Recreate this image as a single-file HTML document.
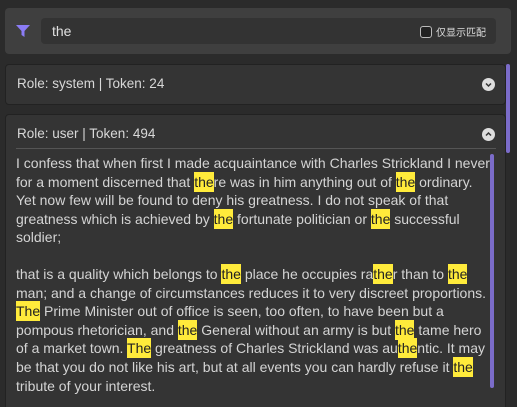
<!DOCTYPE html>
<html><head><meta charset="utf-8"><style>
html,body{margin:0;width:517px;height:407px;overflow:hidden}
body{background:#2b2b2b;font-family:"Liberation Sans","Noto Sans CJK SC",sans-serif;color:#d6d6d6;position:relative}
.top{position:absolute;left:5px;top:8px;width:506px;height:46px;background:#3f3f3f;border-radius:4px}
.inp{position:absolute;left:41px;top:18px;width:455px;height:26px;background:#333;border-radius:4px}
.inp .t{position:absolute;left:11px;top:5px;font-size:14px;color:#e0e0e0}
.chk{position:absolute;right:64px;top:8px;width:10px;height:10px;border:1px solid #bbb;border-radius:3px;background:#222}
.lbl{position:absolute;right:10px;top:6px;font-size:10px;color:#ddd}
.card{position:absolute;left:5px;width:499px;border:1px solid #222;border-radius:4px;background:#343434}
.hd{position:absolute;left:11px;font-size:13.5px;color:#d8d8d8}
.chev{position:absolute;width:13px;height:13px;border-radius:50%;background:#ddd}
.txt{position:absolute;left:16px;top:154px;font-size:14px;line-height:18.55px;white-space:pre;color:#d4d4d4}
.txt b{font-weight:normal;background:#ffeb3b;color:#222;padding:2px 0}
</style></head><body>
<div class="top"></div>
<svg style="position:absolute;left:16px;top:25px" width="14" height="12" viewBox="0 0 14 12"><path d="M0 0H14L8.5 6V12L5.5 10V6Z" fill="#8b7cf6"/></svg>
<div class="inp"><span class="t">the</span><div class="chk"></div><span class="lbl">仅显示匹配</span></div>
<div class="card" style="top:64px;height:39px"><span class="hd" style="top:11px">Role: system | Token: 24</span>
<div class="chev" style="left:476px;top:13px"><svg width="13" height="13"><path d="M4 5.5L6.5 8L9 5.5" stroke="#333" stroke-width="1.5" fill="none"/></svg></div></div>
<div class="card" style="top:114px;height:300px"><span class="hd" style="top:11px">Role: user | Token: 494</span>
<div class="chev" style="left:476px;top:13px"><svg width="13" height="13"><path d="M4 7.5L6.5 5L9 7.5" stroke="#333" stroke-width="1.5" fill="none"/></svg></div>
<div style="position:absolute;left:10px;top:33px;width:480px;height:1px;background:#555"></div></div>
<div style="position:absolute;left:506px;top:64px;width:4px;height:89px;background:#7b6cc9;border-radius:2px"></div>
<div style="position:absolute;left:490px;top:154px;width:4px;height:234px;background:#7b6cc9;border-radius:2px"></div>
<div class="txt">I confess that when first I made acquaintance with Charles Strickland I never
for a moment discerned that <b>the</b>re was in him anything out of <b>the</b> ordinary.
Yet now few will be found to deny his greatness. I do not speak of that
greatness which is achieved by <b>the</b> fortunate politician or <b>the</b> successful
soldier;

that is a quality which belongs to <b>the</b> place he occupies ra<b>the</b>r than to <b>the</b>
man; and a change of circumstances reduces it to very discreet proportions.
<b>The</b> Prime Minister out of office is seen, too often, to have been but a
pompous rhetorician, and <b>the</b> General without an army is but <b>the</b> tame hero
of a market town. <b>The</b> greatness of Charles Strickland was au<b>the</b>ntic. It may
be that you do not like his art, but at all events you can hardly refuse it <b>the</b>
tribute of your interest.</div>
</body></html>
